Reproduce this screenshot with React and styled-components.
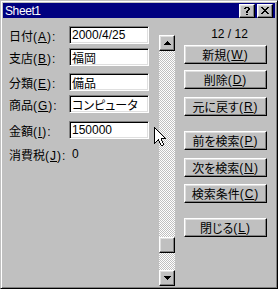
import React from "react";
import styled, { createGlobalStyle } from "styled-components";

const GlobalStyle = createGlobalStyle`
  html, body { margin: 0; padding: 0; background: #c0c0c0; }
  body {
    font-family: "Liberation Sans", "Noto Sans CJK JP", sans-serif;
    font-size: 12px;
    font-feature-settings: "palt";
    color: #000;
  }
`;

// 枠線（凸・凹）
const raised = `
  border: 1px solid;
  border-color: #fff #000 #000 #fff;
  box-shadow: inset -1px -1px #808080, inset 1px 1px #dfdfdf;
`;

const sunken = `
  border: 1px solid;
  border-color: #808080 #fff #fff #808080;
  box-shadow: inset 1px 1px #000, inset -1px -1px #dfdfdf;
`;

const Window = styled.div`
  position: relative;
  box-sizing: border-box;
  width: 278px;
  height: 289px;
  padding: 2px;
  background: #c0c0c0;
  border: 1px solid;
  border-color: #c0c0c0 #000 #000 #c0c0c0;
  box-shadow: inset 1px 1px #fff, inset -1px -1px #808080;
  display: flex;
  flex-direction: column;
`;

const TitleBar = styled.div`
  height: 18px;
  background: #000080;
  color: #fff;
  display: flex;
  align-items: center;
  padding: 0 2px;
`;

const Title = styled.div`
  flex: 1;
  font-size: 12px;
  letter-spacing: -0.4px;
`;

const TitleBtn = styled.div`
  box-sizing: border-box;
  width: 16px;
  height: 14px;
  background: #c0c0c0;
  display: flex;
  align-items: center;
  justify-content: center;
  margin-left: ${(p) => p.$ml || 0}px;
  ${raised}
`;

const Body = styled.div`
  flex: 1;
  display: flex;
  padding: 8px 0 0 6px;
`;

const Fields = styled.div`
  display: flex;
  flex-direction: column;
  width: 140px;
`;

const Row = styled.div`
  display: flex;
  align-items: center;
  height: 18px;
  margin-top: ${(p) => p.$mt}px;
`;

const Label = styled.div`
  width: 60px;
  white-space: nowrap;
`;

const Mnemonic = styled.span`
  letter-spacing: 1px;
`;

const Key = styled.span`
  text-decoration: underline;
`;

const Field = styled.input`
  box-sizing: border-box;
  width: 80px;
  height: 18px;
  margin: 0;
  padding: 0 2px;
  background: #fff;
  font: inherit;
  color: #000;
  outline: none;
  ${sunken}
`;

const Value = styled.div`
  margin-left: 3px;
`;

const ScrollBar = styled.div`
  display: flex;
  flex-direction: column;
  width: 16px;
  height: 251px;
  margin: 9px 0 0 10px;
`;

const ScrollBtn = styled.div`
  box-sizing: border-box;
  width: 16px;
  height: 16px;
  background: #c0c0c0;
  display: flex;
  align-items: center;
  justify-content: center;
  ${raised}
`;

const Track = styled.div`
  flex: 1;
  display: flex;
  flex-direction: column;
  justify-content: flex-end;
  padding-bottom: 17px;
  background-image: conic-gradient(#fff 25%, #c0c0c0 0 50%, #fff 0 75%, #c0c0c0 0);
  background-size: 2px 2px;
`;

const Buttons = styled.div`
  display: flex;
  flex-direction: column;
  width: 83px;
  margin-left: 9px;
`;

const Counter = styled.div`
  height: 14px;
  line-height: 14px;
  margin-top: 1px;
  padding-left: 8px;
  text-align: center;
`;

const Button = styled.div`
  box-sizing: border-box;
  height: 19px;
  margin-top: ${(p) => p.$mt}px;
  background: #c0c0c0;
  display: flex;
  align-items: center;
  justify-content: center;
  white-space: nowrap;
  ${raised}
`;

const Cursor = styled.div`
  position: absolute;
  left: 153px;
  top: 126px;
  line-height: 0;
`;

const PixelArt = ({ rows, colors }) => {
  const w = Math.max(...rows.map((r) => r.length));
  const rects = [];
  rows.forEach((row, y) =>
    [...row].forEach((c, x) => {
      if (colors[c]) {
        rects.push(<rect key={x + "-" + y} x={x} y={y} width={1} height={1} fill={colors[c]} />);
      }
    })
  );
  return (
    <svg width={w} height={rows.length} viewBox={`0 0 ${w} ${rows.length}`} shapeRendering="crispEdges">
      {rects}
    </svg>
  );
};

const BLACK = { X: "#000" };

const helpGlyph = [".XXXX.", "XX..XX", "....XX", "...XX.", "..XX..", "..XX..", "......", "..XX.."];
const closeGlyph = ["XX....XX", ".XX..XX.", "..XXXX..", "...XX...", "..XXXX..", ".XX..XX.", "XX....XX"];
const upGlyph = ["...X...", "..XXX..", ".XXXXX.", "XXXXXXX"];
const downGlyph = ["XXXXXXX", ".XXXXX.", "..XXX..", "...X..."];
const cursorGlyph = [
  "B",
  "BB",
  "BWB",
  "BWWB",
  "BWWWB",
  "BWWWWB",
  "BWWWWWB",
  "BWWWWWWB",
  "BWWWWWWWB",
  "BWWWWWWWWB",
  "BWWWWWWWWWB",
  "BWWWWWWBBBBB",
  "BWWWBWWB",
  "BWWBBWWB",
  "BWB  BWWB",
  "BB   BWWB",
  "B     BWWB",
  "      BWWB",
  "       BB",
];

const fields = [
  { name: "日付", key: "A", value: "2000/4/25", mt: 0 },
  { name: "支店", key: "B", value: "福岡", mt: 4 },
  { name: "分類", key: "E", value: "備品", mt: 7 },
  { name: "商品", key: "G", value: "コンピュータ", mt: 4 },
  { name: "金額", key: "I", value: "150000", mt: 8 },
];

const actions = [
  { name: "新規", key: "W", mt: 4 },
  { name: "削除", key: "D", mt: 6 },
  { name: "元に戻す", key: "R", mt: 8 },
  { name: "前を検索", key: "P", mt: 15 },
  { name: "次を検索", key: "N", mt: 8 },
  { name: "検索条件", key: "C", mt: 7 },
  { name: "閉じる", key: "L", mt: 15 },
];

const App = () => {
  return (
    <>
      <GlobalStyle />
      <Window>
        <TitleBar>
          <Title>Sheet1</Title>
          <TitleBtn>
            <PixelArt rows={helpGlyph} colors={BLACK} />
          </TitleBtn>
          <TitleBtn $ml={2}>
            <PixelArt rows={closeGlyph} colors={BLACK} />
          </TitleBtn>
        </TitleBar>
        <Body>
          <Fields>
            {fields.map((f) => (
              <Row key={f.key} $mt={f.mt}>
                <Label>
                  {f.name}
                  <Mnemonic>
                    (<Key>{f.key}</Key>):
                  </Mnemonic>
                </Label>
                <Field defaultValue={f.value} readOnly />
              </Row>
            ))}
            <Row $mt={6}>
              <Label>
                消費税
                <Mnemonic>
                  (<Key>J</Key>):
                </Mnemonic>
              </Label>
              <Value>0</Value>
            </Row>
          </Fields>
          <ScrollBar>
            <ScrollBtn>
              <PixelArt rows={upGlyph} colors={BLACK} />
            </ScrollBtn>
            <Track>
              <ScrollBtn />
            </Track>
            <ScrollBtn>
              <PixelArt rows={downGlyph} colors={BLACK} />
            </ScrollBtn>
          </ScrollBar>
          <Buttons>
            <Counter>12 / 12</Counter>
            {actions.map((a) => (
              <Button key={a.key} $mt={a.mt}>
                {a.name}
                <Mnemonic>
                  (<Key>{a.key}</Key>)
                </Mnemonic>
              </Button>
            ))}
          </Buttons>
        </Body>
        <Cursor>
          <PixelArt rows={cursorGlyph} colors={{ B: "#000", W: "#fff" }} />
        </Cursor>
      </Window>
    </>
  );
};

export default App;
